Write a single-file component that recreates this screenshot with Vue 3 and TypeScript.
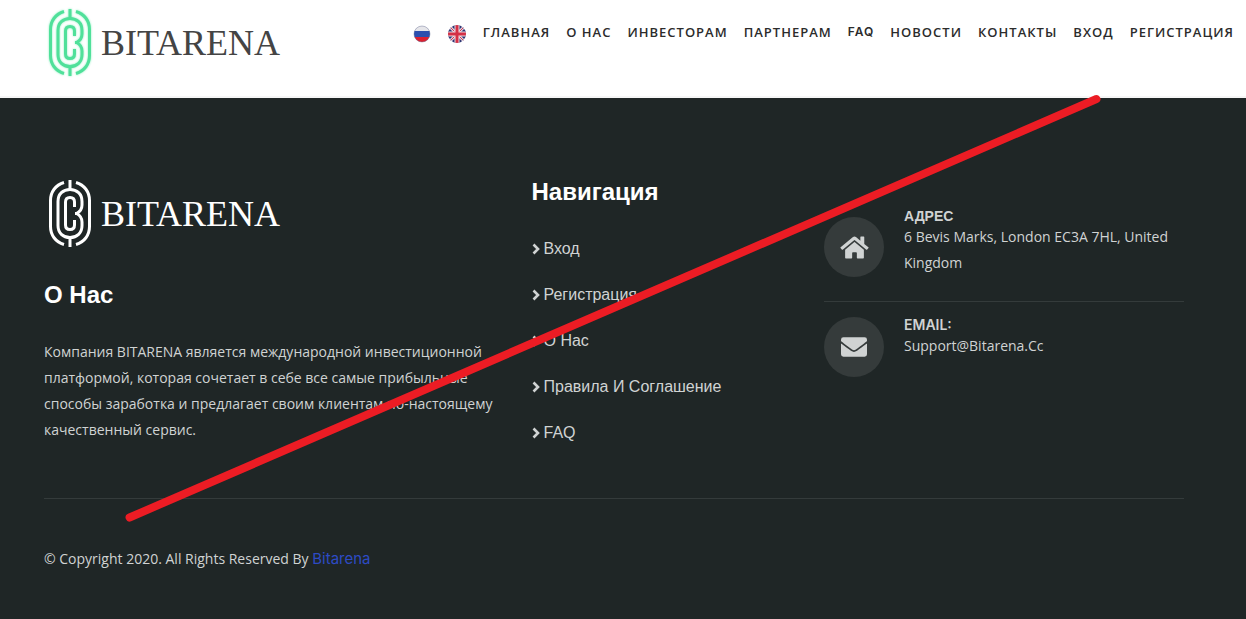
<script setup lang="ts">
import { defineComponent, h } from 'vue'

const LogoMark = defineComponent({
  setup() {
    const strokes = [
      'M16 2.5C7.500 5 2.500 12 2.500 20.500V46.500C2.500 55 7.500 62 16 64.500',
      'M28 2.500C36.500 5 41.500 12 41.500 20.500V46.500C41.500 55 36.500 62 28 64.500',
      'M22 0V9.500M22 57.500V67',
      'M27 33.500H28.500C32.500 31.500 34 28.500 34 25V21.500C34 14 29 9.500 22 9.500S10 14 10 21.500V45.500C10 53 15 57.500 22 57.500S34 53 34 45.500V42C34 38.500 32.500 35.500 28.500 33.500',
      'M26.500 27V22C26.500 19 24.500 17.500 22 17.500S17.500 19 17.500 22V45C17.500 48 19.500 49.500 22 49.500S26.500 48 26.500 45V40',
    ]
    return () =>
      h(
        'svg',
        { class: 'mark', viewBox: '0 0 44 67', width: 44, height: 67, 'aria-hidden': 'true' },
        strokes.map((d) => h('path', { d, fill: 'none', stroke: 'currentColor', 'stroke-width': 3 })),
      )
  },
})

const menu: string[] = ['Главная', 'О нас', 'Инвесторам', 'Партнерам', 'FAQ', 'Новости', 'Контакты', 'Вход', 'Регистрация']
const links: string[] = ['Вход', 'Регистрация', 'О Нас', 'Правила И Соглашение', 'FAQ']
</script>

<template>
  <div class="page">
    <header class="header">
      <a href="#" class="logo green"><LogoMark class="glow" /><span class="name">BITARENA</span></a>
      <nav class="menu" aria-label="Главное меню">
        <a href="#" class="flag" aria-label="Русский">
          <svg width="18" height="18" viewBox="0 0 18 18">
            <clipPath id="ru"><circle cx="9" cy="9" r="8" /></clipPath>
            <g clip-path="url(#ru)">
              <rect width="18" height="18" fill="#e6e6ea" />
              <rect y="6" width="18" height="6" fill="#2c4fae" />
              <rect y="12" width="18" height="6" fill="#dc2030" />
            </g>
            <circle cx="9" cy="9" r="8" fill="none" stroke="#59618a" stroke-opacity=".4" />
          </svg>
        </a>
        <a href="#" class="flag" aria-label="English">
          <svg width="18" height="18" viewBox="0 0 18 18">
            <clipPath id="uk"><circle cx="9" cy="9" r="9" /></clipPath>
            <g clip-path="url(#uk)">
              <rect width="18" height="18" fill="#2d3472" />
              <path d="M0 0L18 18M18 0L0 18" stroke="#e0d4e0" stroke-width="3" />
              <path d="M0 0L18 18M18 0L0 18" stroke="#d23a50" stroke-width="1" />
              <path d="M9 0V18M0 9H18" stroke="#f0dde2" stroke-width="5" />
              <path d="M9 0V18M0 9H18" stroke="#d42f45" stroke-width="3" />
            </g>
          </svg>
        </a>
        <a v-for="item in menu" :key="item" href="#" class="item" :class="{ latin: item === 'FAQ' }">{{ item }}</a>
      </nav>
    </header>

    <footer class="footer">
      <div class="columns">
        <section>
          <a href="#" class="logo white"><LogoMark /><span class="name">BITARENA</span></a>
          <h2 class="about">О Нас</h2>
          <p class="text">Компания BITARENA является международной инвестиционной платформой, которая сочетает в себе все самые прибыльные способы заработка и предлагает своим клиентам по-настоящему качественный сервис.</p>
        </section>
        <section>
          <h2>Навигация</h2>
          <ul class="links">
            <li v-for="link in links" :key="link">
              <a href="#">
                <svg width="8" height="12" viewBox="0 0 8 12" aria-hidden="true"><path d="M1.500 1.500L6 6L1.500 10.500" fill="none" stroke="currentColor" stroke-width="2.600" /></svg>
                <span>{{ link }}</span>
              </a>
            </li>
          </ul>
        </section>
        <section class="contacts">
          <div class="contact">
            <span class="badge">
              <svg width="29" height="25" viewBox="0 0 576 512" aria-hidden="true"><path fill="currentColor" d="M280 148L96 300V464a16 16 0 0 0 16 16l112 0a16 16 0 0 0 16-16V368a16 16 0 0 1 16-16h64a16 16 0 0 1 16 16v96a16 16 0 0 0 16 16l112 0a16 16 0 0 0 16-16V300L296 148a12 12 0 0 0-16 0ZM572 251L488 182V44a12 12 0 0 0-12-12h-56a12 12 0 0 0-12 12v72L318 43a48 48 0 0 0-61 0L4 251a12 12 0 0 0-2 17l26 31a12 12 0 0 0 17 2L280 107a12 12 0 0 1 16 0l235 194a12 12 0 0 0 17-2l26-31a12 12 0 0 0-2-17Z" /></svg>
            </span>
            <div>
              <h3>АДРЕС</h3>
              <p class="text">6 Bevis Marks, London EC3A 7HL, United Kingdom</p>
            </div>
          </div>
          <div class="contact">
            <span class="badge">
              <svg width="26" height="26" viewBox="0 0 512 512" aria-hidden="true"><path fill="currentColor" d="M502 191c4-3 10 0 10 5v204a48 48 0 0 1-48 48H48a48 48 0 0 1-48-48V196c0-5 6-8 10-5 22 17 52 40 154 114 21 15 57 48 92 47 36 0 72-32 92-47 102-74 132-97 154-114ZM256 320c23 0 57-29 73-41 133-96 143-105 173-129a24 24 0 0 0 10-19v-19a48 48 0 0 0-48-48H48a48 48 0 0 0-48 48v19c0 7 3 14 10 19 30 24 40 33 173 129 16 12 50 41 73 41Z" /></svg>
            </span>
            <div>
              <h3 class="latin">EMAIL:</h3>
              <p class="text">Support@Bitarena.Cc</p>
            </div>
          </div>
        </section>
      </div>
      <p class="copyright">© Copyright 2020. All Rights Reserved By <a href="#">Bitarena</a></p>
    </footer>

    <svg class="strike" aria-hidden="true"><line x1="10.400%" y1="83.600%" x2="88%" y2="16%" /></svg>
  </div>
</template>

<style>
body {
  margin: 0;
  background: #1f2626;
}
</style>

<style scoped>
.page {
  position: relative;
  min-height: 100vh;
  font-family: "Open Sans", sans-serif;
  font-size: 14px;
  color: #d0d3d3;
}
a {
  color: inherit;
  text-decoration: none;
}
h2, h3, p, ul {
  margin: 0;
  padding: 0;
}
.header {
  display: flex;
  justify-content: space-between;
  align-items: flex-start;
  height: 98px;
  box-sizing: border-box;
  padding: 9px 12px 0 48px;
  background: #fff;
  border-bottom: 2px solid #f6f6f6;
}
.logo {
  display: flex;
  align-items: center;
  gap: 9px;
}
.name {
  font-family: "Liberation Serif", serif;
  font-size: 36px;
  line-height: 40px;
}
.green {
  color: #50e09a;
}
.glow {
  filter: drop-shadow(0 0 1px #8df0c0);
}
.green .name {
  color: #444;
}
.white {
  color: #fff;
  padding-left: 4px;
}
.menu {
  display: flex;
  align-items: center;
  gap: 16px;
  padding-top: 12px;
}
.flag {
  display: flex;
  margin-right: 1px;
  padding-top: 4px;
}
.item {
  font-family: "Open Sans", sans-serif;
  font-size: 13px;
  font-weight: 600;
  line-height: 20px;
  letter-spacing: 1px;
  text-transform: uppercase;
  white-space: nowrap;
  color: #2c2c2c;
}
.item.latin {
  font-family: Inter, sans-serif;
  font-size: 12px;
}
.footer {
  padding: 82px 62px 0 44px;
  background: #1f2626;
}
.columns {
  display: grid;
  grid-template-columns: 61fr 35fr 48fr;
  gap: 30px;
  padding-bottom: 52px;
  border-bottom: 1px solid #343b3b;
}
h2 {
  font-family: "Liberation Sans", sans-serif;
  font-size: 24px;
  line-height: 24px;
  color: #fff;
}
.about {
  margin: 36px 0 32px;
}
.text {
  line-height: 26px;
}
.links {
  list-style: none;
  display: flex;
  flex-direction: column;
  gap: 20px;
  margin-top: 32px;
}
.links a {
  display: flex;
  align-items: center;
  gap: 4px;
  font-family: "Liberation Sans", sans-serif;
  font-size: 16px;
  line-height: 26px;
}
.contact {
  display: flex;
  gap: 20px;
  padding: 15px 0 24px;
}
.contacts {
  padding-top: 13px;
}
.contact + .contact {
  border-top: 1px solid #343b3b;
}
.badge {
  display: flex;
  flex: none;
  align-items: center;
  justify-content: center;
  width: 60px;
  height: 60px;
  border-radius: 50%;
  background: #353b3b;
}
.contact:first-child .badge {
  margin-top: 9px;
}
h3 {
  font-family: "Liberation Sans", sans-serif;
  font-size: 14px;
  line-height: 16px;
}
h3.latin {
  font-family: Inter, sans-serif;
  font-weight: 600;
}
.copyright {
  padding: 47px 0;
  line-height: 26px;
}
.copyright a {
  font-family: Inter, sans-serif;
  font-size: 15px;
  color: #2d4bc4;
}
.strike {
  position: absolute;
  inset: 0;
  width: 100%;
  height: 100%;
  pointer-events: none;
}
.strike line {
  stroke: #ec1c24;
  stroke-width: 8px;
  stroke-linecap: round;
}
</style>
